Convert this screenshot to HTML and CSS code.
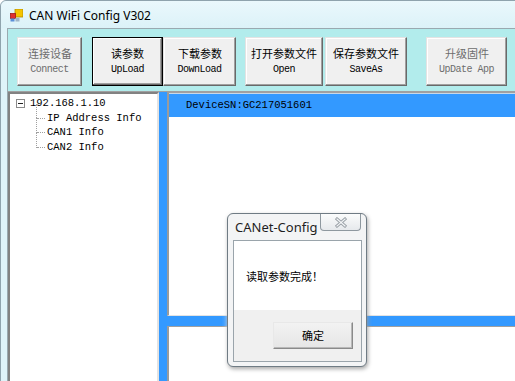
FILE: index.html
```html
<!DOCTYPE html>
<html lang="zh-CN">
<head>
    <meta charset="UTF-8">
    <title>CAN WiFi Config V302</title>
    <link rel="stylesheet" href="styles.css">
</head>
<body>
    <div class="window">
        <!-- Title bar -->
        <div class="titlebar">
            <svg class="app-icon" width="13" height="13" viewBox="0 0 13 13">
                <rect x="5" y="0" width="8" height="8" fill="#f5c400" stroke="#b08a00" stroke-width="0.8"/>
                <rect x="0.5" y="4.5" width="5" height="5" fill="#e03030" stroke="#a01818" stroke-width="0.8"/>
                <rect x="0.5" y="9.5" width="4" height="3" fill="#5b8fd8"/>
                <rect x="5.5" y="9" width="4" height="3.5" fill="#9fb4c8"/>
            </svg>
            <span class="title">CAN WiFi Config V302</span>
        </div>

        <div class="client">
            <!-- Toolbar with the big buttons -->
            <div class="toolbar">
                <button class="tool disabled btn-connect"><b>连接设备</b><span>Connect</span></button>
                <button class="tool default btn-upload"><b>读参数</b><span>UpLoad</span></button>
                <button class="tool btn-download"><b>下载参数</b><span>DownLoad</span></button>
                <button class="tool btn-open"><b>打开参数文件</b><span>Open</span></button>
                <button class="tool btn-saveas"><b>保存参数文件</b><span>SaveAs</span></button>
                <button class="tool disabled btn-update"><b>升级固件</b><span>UpDate App</span></button>
            </div>

            <div class="main">
                <!-- Device tree -->
                <div class="tree">
                    <div class="tree-root"><i class="expander"></i>192.168.1.10</div>
                    <ul class="tree-children">
                        <li>IP Address Info</li>
                        <li>CAN1 Info</li>
                        <li>CAN2 Info</li>
                    </ul>
                </div>

                <!-- Right side panels -->
                <div class="right">
                    <div class="info-panel">
                        <div class="sn">DeviceSN:GC217051601</div>
                        <div class="info-list"></div>
                    </div>
                    <div class="log-panel"></div>
                </div>
            </div>
        </div>
    </div>

    <!-- Message box on top -->
    <div class="msgbox">
        <div class="msgbox-title">
            <span>CANet-Config</span>
            <div class="msgbox-close">
                <svg width="14" height="11" viewBox="0 0 14 11">
                    <path d="M3 2 L11 9 M11 2 L3 9" stroke="#9aa1a7" stroke-width="3" stroke-linecap="square"/>
                    <path d="M3 2 L11 9 M11 2 L3 9" stroke="#f4f6f8" stroke-width="1.2" stroke-linecap="square"/>
                </svg>
            </div>
        </div>
        <div class="msgbox-client">
            <div class="msgbox-text">读取参数完成！</div>
            <div class="msgbox-footer">
                <button class="msgbox-ok">确定</button>
            </div>
        </div>
    </div>
</body>
</html>
```

FILE: styles.css
```css
html, body {
    margin: 0;
    padding: 0;
    overflow: hidden;
    background: #ffffff;
}

body {
    width: 515px;
    height: 381px;
    position: relative;
    font-family: "Noto Sans CJK SC", "Noto Sans", sans-serif;
}

/* Main window frame */
.window {
    width: 540px;
    height: 400px;
    background: #dff3f9;
    border: 1px solid #8fa3ad;
    border-radius: 6px 6px 0 0;
    box-sizing: border-box;
    display: flex;
    flex-direction: column;
}

.titlebar {
    height: 27px;
    display: flex;
    align-items: center;
    padding-left: 9px;
    background: linear-gradient(#eaf8fc, #dcf2f8);
    border-radius: 6px 6px 0 0;
}

.app-icon {
    margin-right: 6px;
    margin-top: 2px;
}

.title {
    font-family: "Noto Sans", "Noto Sans CJK SC", sans-serif;
    font-size: 12px;
    color: #000;
    margin-top: 1px;
}

.client {
    flex: 1;
    margin-left: 6px;
    border-top: 1px solid #9aa9b0;
    border-left: 1px solid #9aa9b0;
    display: flex;
    flex-direction: column;
}

/* Toolbar */
.toolbar {
    height: 63px;
    background: #b2ecec;
    border-bottom: 1px solid #a0a0a0;
    display: flex;
    align-items: flex-start;
    padding-top: 8px;
    padding-left: 9px;
    box-sizing: border-box;
}

.tool {
    height: 49px;
    margin: 0;
    padding: 0;
    background: #f0f0f0;
    border: 1px solid;
    border-color: #e3e3e3 #696969 #696969 #e3e3e3;
    box-shadow: inset -1px -1px #a0a0a0, inset 1px 1px #ffffff;
    display: flex;
    flex-direction: column;
    align-items: center;
    justify-content: center;
    color: #000;
}

.tool b {
    font-weight: normal;
    font-size: 11px;
    line-height: 16px;
}

.tool span {
    font-family: "Liberation Mono", monospace;
    font-size: 10px;
    letter-spacing: -0.5px;
    line-height: 16px;
}

.tool.disabled {
    color: #6d6d6d;
}

.tool.default {
    border-color: #000;
    box-shadow: inset -1px -1px #696969, inset 1px 1px #ffffff, inset -2px -2px #a0a0a0;
}

.btn-connect { width: 65px; }
.btn-upload { width: 71px; margin-left: 10px; }
.btn-download { width: 73px; }
.btn-open { width: 78px; margin-left: 9px; }
.btn-saveas { width: 82px; margin-left: 2px; }
.btn-update { width: 81px; margin-left: 19px; }

/* Lower part */
.main {
    flex: 1;
    display: flex;
}

.tree {
    width: 151px;
    background: #fff;
    border: 2px solid;
    border-color: #828282 #e3e3e3 #e3e3e3 #828282;
    box-sizing: border-box;
    font-family: "Liberation Mono", monospace;
    font-size: 10.5px;
    line-height: 14.7px;
    color: #000;
    padding-top: 2px;
}

.tree-root {
    display: flex;
    align-items: center;
    padding-left: 6px;
}

.expander {
    width: 7px;
    height: 7px;
    border: 1px solid #8a8a8a;
    margin-right: 5px;
    position: relative;
    background: #fff;
}

.expander::after {
    content: "";
    position: absolute;
    left: 1px;
    top: 3px;
    width: 5px;
    height: 1px;
    background: #222;
}

.tree-children {
    list-style: none;
    margin: 0;
    padding: 0 0 0 37px;
}

.tree-children li {
    position: relative;
}

.tree-children li::before {
    content: "";
    position: absolute;
    left: -11px;
    top: -7px;
    height: 14.7px;
    border-left: 1px dotted #a0a0a0;
}

.tree-children li::after {
    content: "";
    position: absolute;
    left: -10px;
    top: 7px;
    width: 8px;
    border-top: 1px dotted #a0a0a0;
}

.right {
    flex: 1;
    background: #3399ff;
    padding-left: 8px;
    display: flex;
    flex-direction: column;
}

.info-panel {
    height: 224px;
    background: #fff;
    border-top: 1px solid #a0a0a0;
    border-left: 2px solid #9b9b9b;
    border-bottom: 1px solid #e3e3e3;
    box-sizing: border-box;
    display: flex;
    flex-direction: column;
}

.sn {
    height: 23px;
    background: #3399ff;
    border-top: 1px solid #c8d8e8;
    font-family: "Liberation Mono", monospace;
    font-size: 10.5px;
    line-height: 23px;
    padding-left: 17px;
    color: #000;
}

.info-list {
    flex: 1;
}

.log-panel {
    flex: 1;
    margin-top: 10px;
    background: #fff;
    border-top: 1px solid #a0a0a0;
    border-left: 2px solid #9b9b9b;
}

/* Message box */
.msgbox {
    position: absolute;
    left: 227px;
    top: 213px;
    width: 140px;
    height: 154px;
    box-sizing: border-box;
    background: #f3f4f5;
    border: 1px solid #6f7b84;
    border-radius: 6px;
    box-shadow: 1px 2px 4px rgba(0, 0, 0, 0.35), 0 0 5px rgba(255, 255, 255, 0.9);
    padding: 0 4px 4px 5px;
    display: flex;
    flex-direction: column;
}

.msgbox-title {
    height: 26px;
    display: flex;
    align-items: flex-start;
    justify-content: space-between;
}

.msgbox-title span {
    font-family: "Noto Sans", sans-serif;
    font-size: 13px;
    line-height: 27px;
    padding-left: 2px;
    color: #1e1e1e;
}

.msgbox-close {
    width: 41px;
    height: 17px;
    margin-right: 1px;
    border: 1px solid #8e989f;
    border-top: none;
    border-radius: 0 0 4px 4px;
    background: linear-gradient(#fbfcfc, #e6e9ec);
    display: flex;
    align-items: center;
    justify-content: center;
    box-sizing: border-box;
}

.msgbox-client {
    flex: 1;
    border: 1px solid #9aa4ab;
    background: #fff;
    display: flex;
    flex-direction: column;
}

.msgbox-text {
    height: 69px;
    box-sizing: border-box;
    padding: 28px 0 0 12px;
    font-size: 11px;
    line-height: 14px;
    color: #000;
}

.msgbox-footer {
    flex: 1;
    background: #f0f0f0;
    padding: 11px 0 0 39px;
}

.msgbox-ok {
    width: 80px;
    height: 27px;
    margin: 0;
    padding: 0;
    font-family: "Noto Sans CJK SC", sans-serif;
    font-size: 11px;
    color: #000;
    background: linear-gradient(#f2f2f2, #e6e6e6);
    border: 1px solid;
    border-color: #e8e8e8 #8a8a8a #8a8a8a #e8e8e8;
    box-shadow: inset -1px -1px #b8b8b8;
}
```
